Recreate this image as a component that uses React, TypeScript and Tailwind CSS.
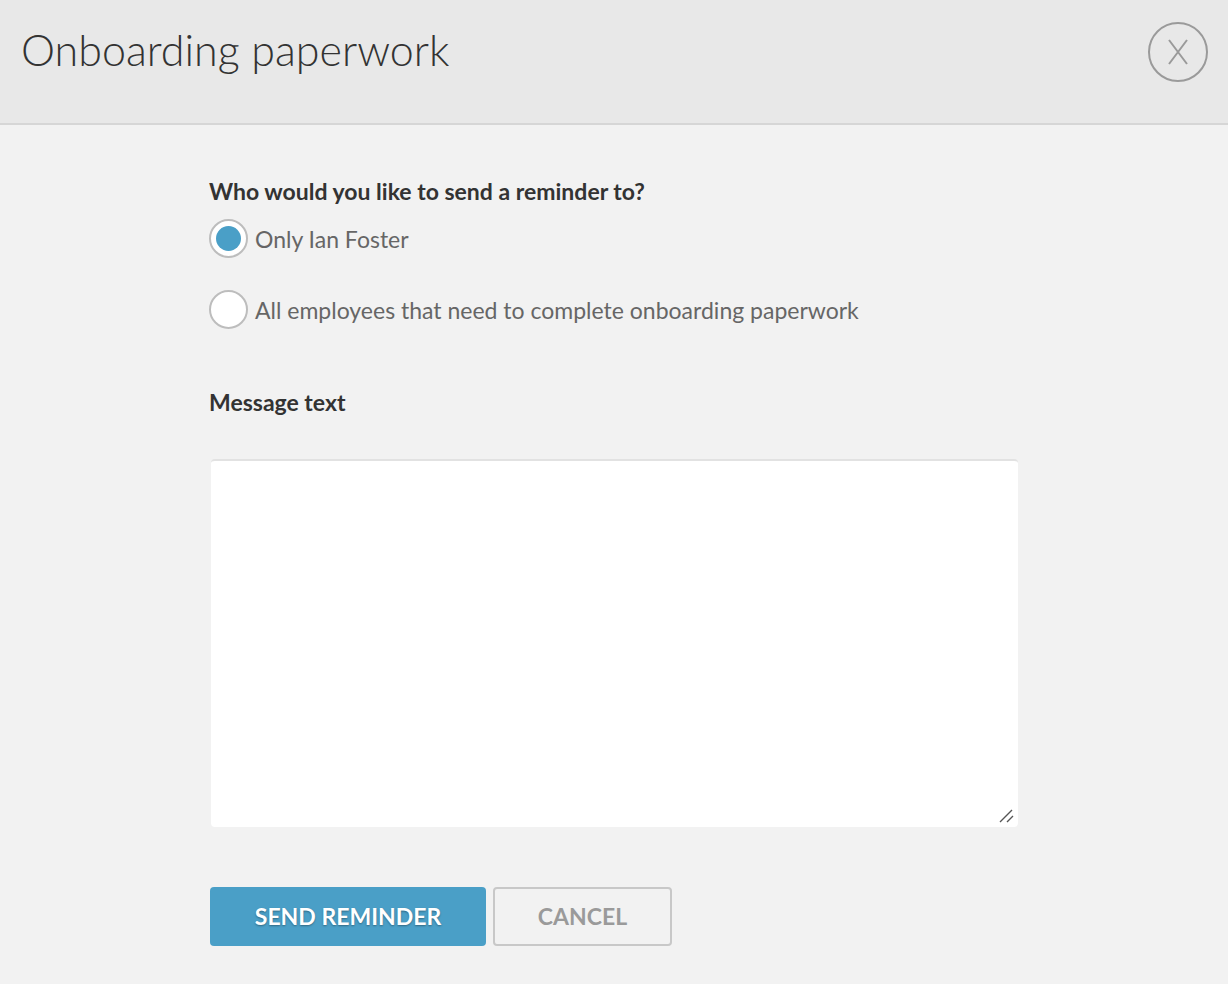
import { useState } from 'react'

const FONT = { fontFamily: 'Lato, "Open Sans", sans-serif' }

function Radio({ checked, label, onClick }: { checked: boolean; label: string; onClick: () => void }) {
  return (
    <label className="flex items-center gap-[7px] cursor-pointer" onClick={onClick}>
      <span className="w-[39px] h-[39px] rounded-full bg-white border-2 border-[#bdbdbd] flex items-center justify-center shrink-0">
        {checked && <span className="w-[25px] h-[25px] rounded-full bg-[#4a9fc7]" />}
      </span>
      <span className="text-[23px] leading-[30px] text-[#666]">{label}</span>
    </label>
  )
}

export default function App() {
  const [who, setWho] = useState('ian')

  return (
    <div className="w-[1228px] h-[984px] bg-[#f2f2f2] flex flex-col" style={FONT}>
      <header className="h-[125px] bg-[#e8e8e8] border-b-2 border-[#d6d6d6] flex items-start justify-between pl-[21px] pr-[20px] shrink-0">
        <h1 className="mt-[18px] text-[43px] font-light text-[#333]">Onboarding paperwork</h1>
        <button className="mt-[22px] w-[60px] h-[60px] rounded-full border-2 border-[#9a9a9a] flex items-center justify-center">
          <svg width="22" height="26" viewBox="0 0 22 26" fill="none" stroke="#9a9a9a" strokeWidth="2">
            <path d="M2 1 L20 25 M20 1 L2 25" />
          </svg>
        </button>
      </header>

      <main className="pl-[209px] pt-[52px] w-[1019px]">
        <h2 className="text-[23px] font-bold text-[#333] leading-[28px]">Who would you like to send a reminder to?</h2>
        <div className="mt-[14px] flex flex-col gap-[32px]">
          <Radio checked={who === 'ian'} label="Only Ian Foster" onClick={() => setWho('ian')} />
          <Radio checked={who === 'all'} label="All employees that need to complete onboarding paperwork" onClick={() => setWho('all')} />
        </div>

        <h2 className="mt-[59px] text-[23px] font-bold text-[#333] leading-[28px]">Message text</h2>
        <div className="relative mt-[43px] ml-[2px] w-[807px] h-[368px]">
          <textarea className="block w-full h-full resize-none bg-white rounded-[4px] border-t-2 border-[#e2e2e2] outline-none p-3 text-[18px] text-[#333]" />
          <svg className="absolute right-[3px] bottom-[4px] pointer-events-none" width="16" height="14" viewBox="0 0 16 14" fill="none" stroke="#555" strokeWidth="1.4">
            <path d="M1 13 L13 1 M8 13 L14 7" />
          </svg>
        </div>

        <div className="mt-[60px] ml-[1px] flex gap-[7px]">
          <button
            className="w-[276px] h-[59px] rounded-[4px] bg-[#4a9fc7] text-white text-[23px] font-bold uppercase"
            style={{ textShadow: '0 1px 2px rgba(0,0,0,0.35)' }}
          >
            Send Reminder
          </button>
          <button className="w-[179px] h-[59px] rounded-[4px] border-2 border-[#c8c8c8] text-[#9a9a9a] text-[23px] font-bold uppercase">
            Cancel
          </button>
        </div>
      </main>
    </div>
  )
}
